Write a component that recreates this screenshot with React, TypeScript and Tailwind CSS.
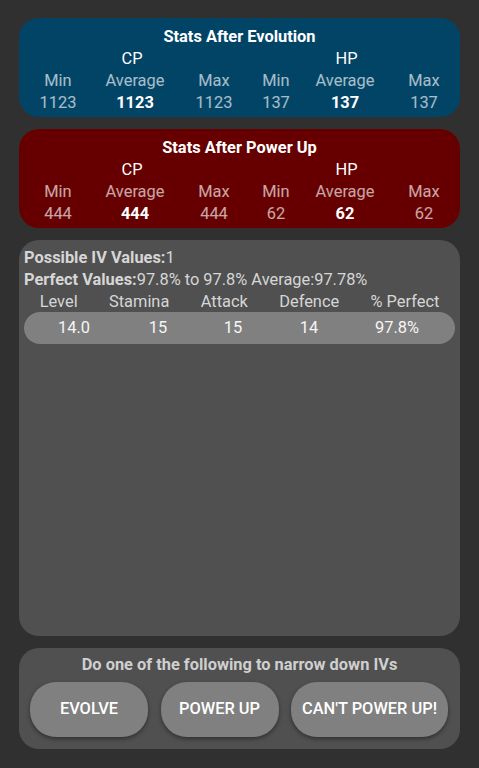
import React from 'react';

type StatSet = {
  cp: [number, number, number];
  hp: [number, number, number];
};

const labels = ['Min', 'Average', 'Max', 'Min', 'Average', 'Max'];

function StatsCard({ title, stats, bg }: { title: string; stats: StatSet; bg: string }) {
  const values = [...stats.cp, ...stats.hp];
  return (
    <div className={`${bg} rounded-[20px] pl-[6px] pt-[8px] pb-[3px] text-[16.4px] leading-[22px]`}>
      <div className="text-center font-bold text-white pr-[6px]">{title}</div>
      <div className="grid grid-cols-[214px_215px] text-white">
        <div className="text-center">CP</div>
        <div className="text-center">HP</div>
      </div>
      <div className="grid grid-cols-[66px_88px_70px_54px_84px_74px] text-white/65">
        {labels.map((l, i) => (
          <div key={i} className="text-center">
            {l}
          </div>
        ))}
      </div>
      <div className="grid grid-cols-[66px_88px_70px_54px_84px_74px]">
        {values.map((v, i) => (
          <div
            key={i}
            className={`text-center ${i % 3 === 1 ? 'font-bold text-white' : 'text-white/65'}`}
          >
            {v}
          </div>
        ))}
      </div>
    </div>
  );
}

const ivHeaders = ['Level', 'Stamina', 'Attack', 'Defence', '% Perfect'];
const ivRows = [['14.0', '15', '15', '14', '97.8%']];

export default function App() {
  return (
    <div
      className="min-h-[768px] bg-[#303030] px-[19px] pt-[18px] pb-[19px] flex flex-col gap-[12px]"
      style={{ fontFamily: 'Roboto, "Noto Sans", sans-serif' }}
    >
      <StatsCard
        title="Stats After Evolution"
        bg="bg-[#024466]"
        stats={{ cp: [1123, 1123, 1123], hp: [137, 137, 137] }}
      />
      <StatsCard
        title="Stats After Power Up"
        bg="bg-[#660000]"
        stats={{ cp: [444, 444, 444], hp: [62, 62, 62] }}
      />

      <div className="h-[396px] bg-[#505050] rounded-[20px] px-[5px] pt-[7px] text-[16.4px] leading-[22px] text-[#d6d6d6]">
        <div>
          <span className="font-bold">Possible IV Values:</span>1
        </div>
        <div>
          <span className="font-bold">Perfect Values:</span>97.8% to 97.8% Average:97.78%
        </div>
        <div className="flex">
          {ivHeaders.map((h) => (
            <div key={h} className="grow text-center">
              {h}
            </div>
          ))}
        </div>
        {ivRows.map((row, r) => (
          <div
            key={r}
            className="-mt-[1px] h-[32px] bg-[#808080] rounded-full grid grid-cols-[100px_68px_82px_70px_106px] items-center text-[#f5f5f5]"
          >
            {row.map((v, i) => (
              <div key={i} className="text-center">
                {v}
              </div>
            ))}
          </div>
        ))}
      </div>

      <div className="bg-[#505050] rounded-[20px] px-[11px] pt-[6px] pb-[12px]">
        <div className="text-center font-bold text-[16.4px] leading-[22px] text-[#cfcfcf]">
          Do one of the following to narrow down IVs
        </div>
        <div className="mt-[6px] flex justify-between pr-[1px]">
          {['EVOLVE', 'POWER UP', "CAN'T POWER UP!"].map((b) => (
            <button
              key={b}
              className="h-[55px] min-w-[118px] px-[11px] rounded-[26px] bg-[#808080] text-white font-medium text-[16.4px] shadow-[0_2px_4px_rgba(0,0,0,0.4)]"
            >
              {b}
            </button>
          ))}
        </div>
      </div>
    </div>
  );
}
